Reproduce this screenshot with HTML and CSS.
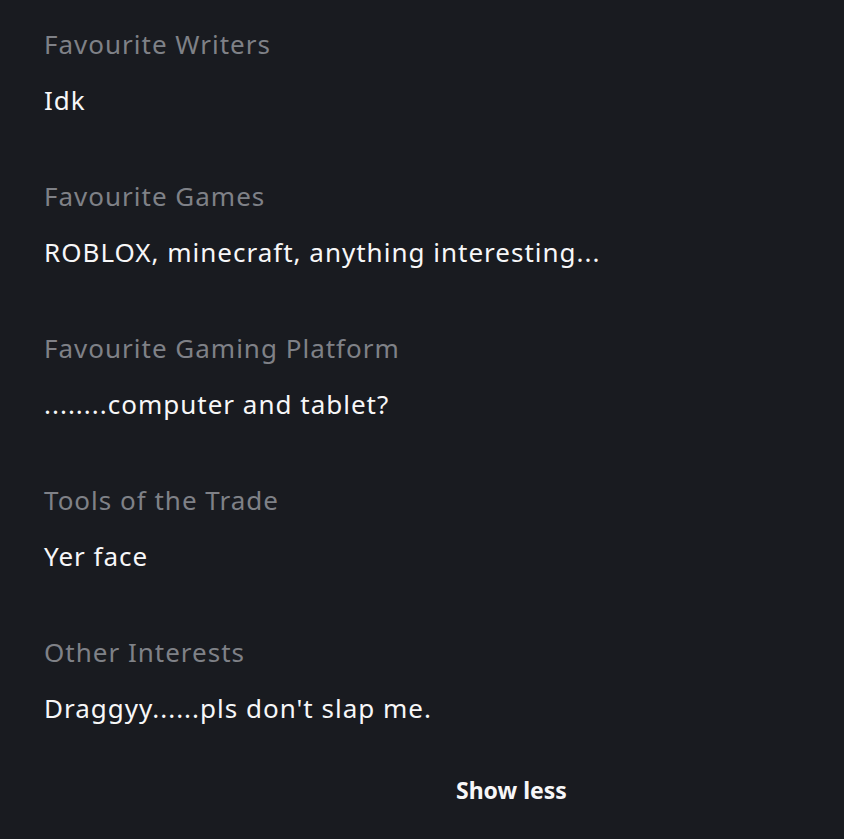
FILE: index.html
```html
<!DOCTYPE html>
<html>
<head>
<meta charset="utf-8">
<link rel="stylesheet" href="styles.css">
</head>
<body>
<div class="page">
  <dl class="about">
    <div class="item">
      <dt class="label">Favourite Writers</dt>
      <dd class="value">Idk</dd>
    </div>
    <div class="item">
      <dt class="label">Favourite Games</dt>
      <dd class="value">ROBLOX, minecraft, anything interesting...</dd>
    </div>
    <div class="item">
      <dt class="label">Favourite Gaming Platform</dt>
      <dd class="value">........computer and tablet?</dd>
    </div>
    <div class="item">
      <dt class="label">Tools of the Trade</dt>
      <dd class="value">Yer face</dd>
    </div>
    <div class="item">
      <dt class="label">Other Interests</dt>
      <dd class="value">Draggyy......pls don't slap me.</dd>
    </div>
  </dl>
  <div class="toggle-row">
    <button class="toggle">Show less</button>
  </div>
</div>
</body>
</html>
```

FILE: styles.css
```css
html, body {
  margin: 0;
  padding: 0;
  background: #191b20;
}
body {
  font-family: "Noto Sans", "Open Sans", sans-serif;
  height: 839px;
  overflow: hidden;
}
.page {
  padding: 26px 0 0 44px;
}
.about {
  margin: 0;
  display: flex;
  flex-direction: column;
}
.item {
  height: 152px;
}
.label {
  margin: 0;
  font-size: 26px;
  letter-spacing: 1px;
  line-height: 36px;
  color: #7f8187;
}
.value {
  margin: 20px 0 0 0;
  font-size: 26px;
  letter-spacing: 1px;
  line-height: 36px;
  color: #f7f7f8;
}
.toggle-row {
  display: flex;
  margin-top: -20px;
  padding-left: 400px;
}
.toggle {
  background: none;
  border: none;
  padding: 8px 12px;
  font-family: "Noto Sans", "Open Sans", sans-serif;
  font-weight: 700;
  font-size: 23px;
  color: #f7f7f8;
  cursor: pointer;
}
```
